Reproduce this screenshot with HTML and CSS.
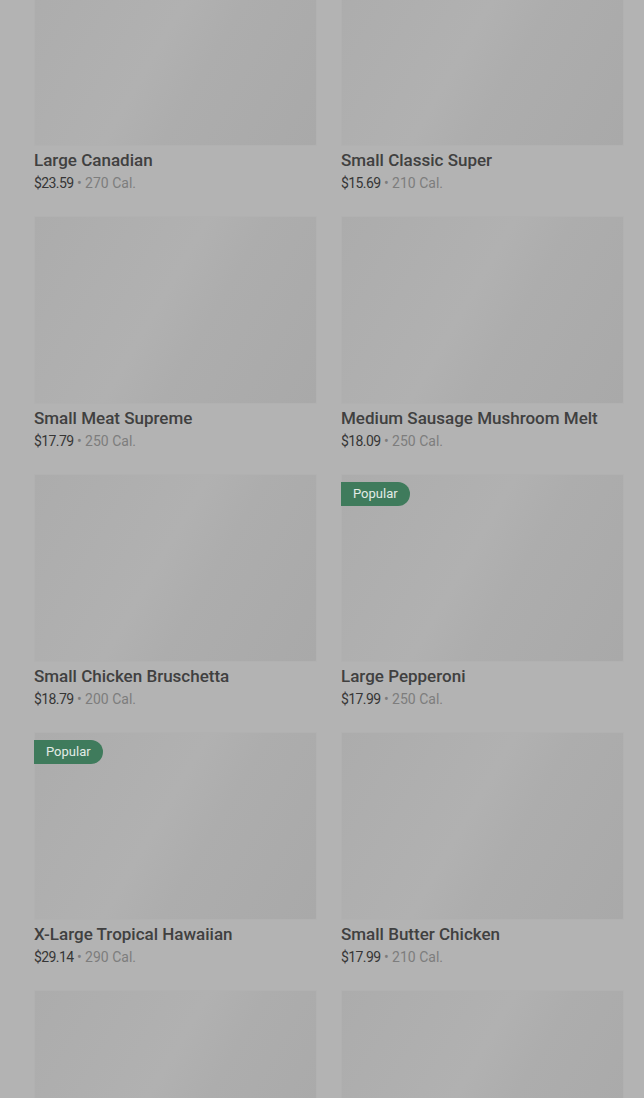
FILE: index.html
```html
<!DOCTYPE html>
<html lang="en">
<head>
    <meta charset="UTF-8">
    <meta name="viewport" content="width=device-width, initial-scale=1.0">
    <title>Menu</title>
    <link rel="stylesheet" href="styles.css">
</head>
<body>
    <div class="menu-page">
        <div class="menu-grid">
            <div class="menu-item">
                <div class="menu-image"></div>
                <div class="menu-name">Large Canadian</div>
                <div class="menu-meta"><span class="price">$23.59</span> • 270 Cal.</div>
            </div>
            <div class="menu-item">
                <div class="menu-image"></div>
                <div class="menu-name">Small Classic Super</div>
                <div class="menu-meta"><span class="price">$15.69</span> • 210 Cal.</div>
            </div>
            <div class="menu-item">
                <div class="menu-image"></div>
                <div class="menu-name">Small Meat Supreme</div>
                <div class="menu-meta"><span class="price">$17.79</span> • 250 Cal.</div>
            </div>
            <div class="menu-item">
                <div class="menu-image"></div>
                <div class="menu-name">Medium Sausage Mushroom Melt</div>
                <div class="menu-meta"><span class="price">$18.09</span> • 250 Cal.</div>
            </div>
            <div class="menu-item">
                <div class="menu-image"></div>
                <div class="menu-name">Small Chicken Bruschetta</div>
                <div class="menu-meta"><span class="price">$18.79</span> • 200 Cal.</div>
            </div>
            <div class="menu-item">
                <div class="menu-image">
                    <span class="badge">Popular</span>
                </div>
                <div class="menu-name">Large Pepperoni</div>
                <div class="menu-meta"><span class="price">$17.99</span> • 250 Cal.</div>
            </div>
            <div class="menu-item">
                <div class="menu-image">
                    <span class="badge">Popular</span>
                </div>
                <div class="menu-name">X-Large Tropical Hawaiian</div>
                <div class="menu-meta"><span class="price">$29.14</span> • 290 Cal.</div>
            </div>
            <div class="menu-item">
                <div class="menu-image"></div>
                <div class="menu-name">Small Butter Chicken</div>
                <div class="menu-meta"><span class="price">$17.99</span> • 210 Cal.</div>
            </div>
            <div class="menu-item">
                <div class="menu-image"></div>
            </div>
            <div class="menu-item">
                <div class="menu-image"></div>
            </div>
        </div>
    </div>
</body>
</html>
```

FILE: styles.css
```css
* {
    margin: 0;
    padding: 0;
    box-sizing: border-box;
}

html, body {
    height: 100%;
    overflow: hidden;
}

body {
    font-family: Roboto, "Liberation Sans", sans-serif;
    background: #b3b3b3;
    color: #383838;
}

/* page scrolled down a bit, first row cut off */
.menu-page {
    padding: 0 20px 0 34px;
    margin-top: -42px;
}

.menu-grid {
    display: grid;
    grid-template-columns: 283px 283px;
    column-gap: 24px;
    row-gap: 24px;
}

.menu-image {
    position: relative;
    height: 188px;
    border-radius: 2px;
    border: 1px solid #b1b1b1;
    background: linear-gradient(120deg, #acacac 0%, #b1b1b1 45%, #adadad 60%, #a9a9a9 100%);
}

.badge {
    position: absolute;
    top: 7px;
    left: -1px;
    height: 24px;
    line-height: 24px;
    padding: 0 12px;
    background: #3f7b5c;
    color: #e3ebe6;
    font-size: 13px;
    border-radius: 0 12px 12px 0;
}

.menu-name {
    margin-top: 4px;
    font-size: 17px;
    font-weight: 500;
    line-height: 20px;
    color: #404040;
}

.menu-meta {
    margin-top: 4px;
    font-size: 14px;
    line-height: 18px;
    color: #7d7d7d;
}

.menu-meta .price {
    color: #363636;
    letter-spacing: -0.6px;
}
```
